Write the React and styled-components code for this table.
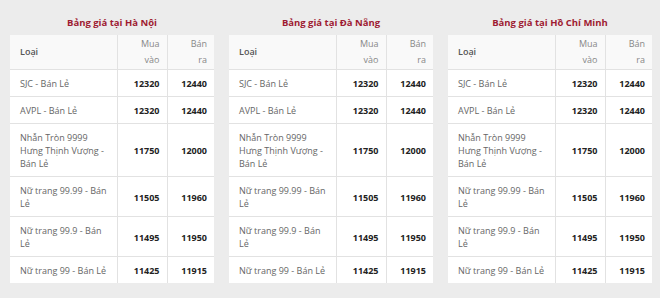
import React from "react";
import styled, { createGlobalStyle } from "styled-components";

const GlobalStyle = createGlobalStyle`
  html, body {
    margin: 0;
    padding: 0;
    background: #ececec;
    font-family: "Open Sans", "Liberation Sans", sans-serif;
  }
`;

const Page = styled.div`
  display: flex;
  gap: 15px;
  padding: 16px 8px 0 10px;
  width: 660px;
  height: 298px;
  box-sizing: border-box;
`;

const Panel = styled.div`
  width: 204px;
  display: flex;
  flex-direction: column;
`;

const Title = styled.h3`
  margin: 0 0 6px;
  text-align: center;
  color: #9e1b32;
  font-size: 9.5px;
  font-weight: 700;
  line-height: 13px;
`;

const Table = styled.table`
  width: 100%;
  border-collapse: collapse;
  table-layout: fixed;
  background: #fff;
  font-size: 9px;
`;

const Th = styled.th`
  background: #f9f9f9;
  color: ${(p) => (p.$left ? "#555" : "#888")};
  font-weight: ${(p) => (p.$left ? 600 : 400)};
  text-align: ${(p) => (p.$left ? "left" : "right")};
  line-height: 16px;
  padding: ${(p) => (p.$left ? "1px 10px" : "1px 7px 1px 14px")};
  border-left: ${(p) => (p.$left ? "none" : "1px solid #e2e2e2")};
`;

const Td = styled.td`
  color: ${(p) => (p.$num ? "#222" : "#666")};
  font-weight: ${(p) => (p.$num ? 700 : 400)};
  text-align: ${(p) => (p.$num ? "right" : "left")};
  line-height: 13px;
  padding: 7px ${(p) => (p.$num ? "7px" : "8px")} 6px ${(p) => (p.$num ? "7px" : "10px")};
  border-top: 1px solid #e2e2e2;
  border-left: ${(p) => (p.$num ? "1px solid #e2e2e2" : "none")};
  vertical-align: middle;
`;

const rows = [
  ["SJC - Bán Lẻ", "12320", "12440"],
  ["AVPL - Bán Lẻ", "12320", "12440"],
  ["Nhẫn Tròn 9999 Hưng Thịnh Vượng - Bán Lẻ", "11750", "12000"],
  ["Nữ trang 99.99 - Bán Lẻ", "11505", "11960"],
  ["Nữ trang 99.9 - Bán Lẻ", "11495", "11950"],
  ["Nữ trang 99 - Bán Lẻ", "11425", "11915"],
];

const cities = ["Hà Nội", "Đà Nẵng", "Hồ Chí Minh"];

function PriceTable({ city }) {
  return (
    <Panel>
      <Title>Bảng giá tại {city}</Title>
      <Table>
        <colgroup>
          <col style={{ width: 107 }} />
          <col style={{ width: 50 }} />
          <col style={{ width: 47 }} />
        </colgroup>
        <thead>
          <tr>
            <Th $left>Loại</Th>
            <Th>Mua vào</Th>
            <Th>Bán ra</Th>
          </tr>
        </thead>
        <tbody>
          {rows.map((r) => (
            <tr key={r[0]}>
              <Td>{r[0]}</Td>
              <Td $num>{r[1]}</Td>
              <Td $num>{r[2]}</Td>
            </tr>
          ))}
        </tbody>
      </Table>
    </Panel>
  );
}

export default function App() {
  return (
    <>
      <GlobalStyle />
      <Page>
        {cities.map((c) => (
          <PriceTable key={c} city={c} />
        ))}
      </Page>
    </>
  );
}
